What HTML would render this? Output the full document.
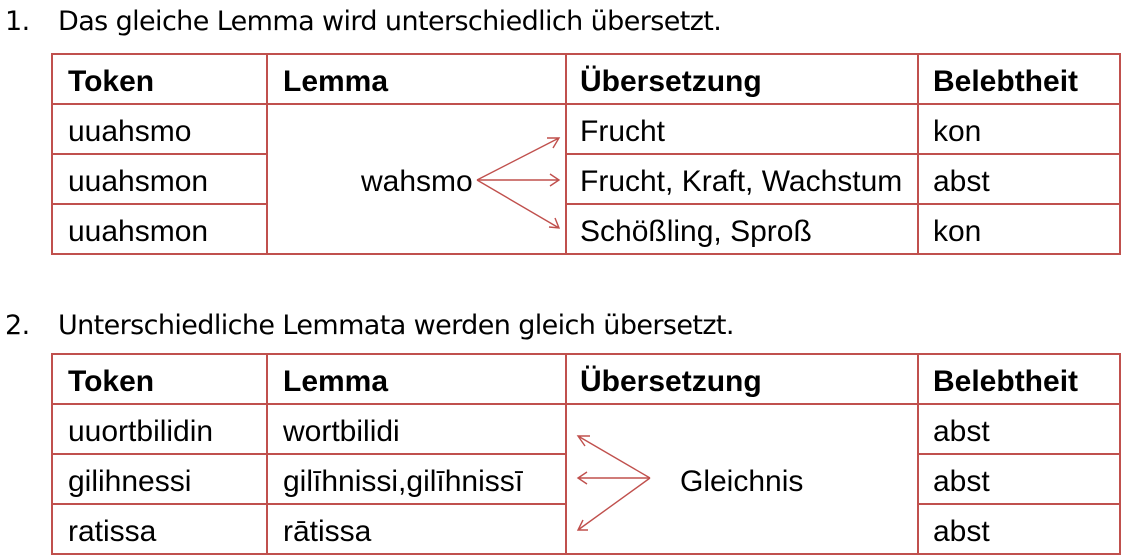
<!DOCTYPE html>
<html><head><meta charset="utf-8"><style>
body{margin:0;width:1133px;height:558px;background:#fff;position:relative;overflow:hidden;font-family:"Liberation Sans",Arial,sans-serif;color:#000}
.t{position:absolute;font-size:30px;line-height:50px;height:50px;white-space:nowrap;margin-top:2px}
.b{font-weight:bold}
.h{position:absolute;font-size:27px;line-height:40px;white-space:nowrap;font-family:"DejaVu Sans","Liberation Sans",sans-serif;letter-spacing:-0.6px}
svg{position:absolute;left:0;top:0}
</style></head><body>
<svg width="1133" height="558" stroke="#c0504d" stroke-width="2" fill="none">
<rect x="52" y="54" width="1068" height="200"/>
<line x1="52" y1="104" x2="1120" y2="104"/>
<line x1="52" y1="154" x2="267" y2="154"/><line x1="566" y1="154" x2="1120" y2="154"/>
<line x1="52" y1="204" x2="267" y2="204"/><line x1="566" y1="204" x2="1120" y2="204"/>
<line x1="267" y1="54" x2="267" y2="254"/><line x1="566" y1="54" x2="566" y2="254"/><line x1="918" y1="54" x2="918" y2="254"/>
<rect x="52" y="354" width="1068" height="200"/>
<line x1="52" y1="404" x2="1120" y2="404"/>
<line x1="52" y1="454" x2="566" y2="454"/><line x1="918" y1="454" x2="1120" y2="454"/>
<line x1="52" y1="504" x2="566" y2="504"/><line x1="918" y1="504" x2="1120" y2="504"/>
<line x1="267" y1="354" x2="267" y2="554"/><line x1="566" y1="354" x2="566" y2="554"/><line x1="918" y1="354" x2="918" y2="554"/>
<g stroke-width="1.4">
<path d="M477 180 L559 138 M547 138 L559 138 L553 148"/>
<path d="M477 180 L559 180 M550 174 L559 180 L550 186"/>
<path d="M477 180 L559 228 M549 227 L559 228 L555 218"/>
<path d="M650 478 L578 436 M590 436 L578 436 L585 446"/>
<path d="M650 478 L578 478 M587 472 L578 478 L587 484"/>
<path d="M650 478 L578 530 M588 530 L578 530 L583 520"/>
</g>
</svg>
<div class="h" style="left:5px;top:2px">1.</div>
<div class="h" style="left:58px;top:2px">Das gleiche Lemma wird unterschiedlich übersetzt.</div>
<div class="h" style="left:5px;top:306px">2.</div>
<div class="h" style="left:58px;top:306px">Unterschiedliche Lemmata werden gleich übersetzt.</div>

<div class="t b" style="left:68px;top:55px">Token</div>
<div class="t b" style="left:283px;top:55px">Lemma</div>
<div class="t b" style="left:580px;top:55px">Übersetzung</div>
<div class="t b" style="left:933px;top:55px">Belebtheit</div>
<div class="t" style="left:68px;top:105px">uuahsmo</div>
<div class="t" style="left:68px;top:155px">uuahsmon</div>
<div class="t" style="left:68px;top:205px">uuahsmon</div>
<div class="t" style="left:361px;top:155px">wahsmo</div>
<div class="t" style="left:580px;top:105px">Frucht</div>
<div class="t" style="left:580px;top:155px">Frucht, Kraft, Wachstum</div>
<div class="t" style="left:580px;top:205px">Schößling, Sproß</div>
<div class="t" style="left:933px;top:105px">kon</div>
<div class="t" style="left:933px;top:155px">abst</div>
<div class="t" style="left:933px;top:205px">kon</div>

<div class="t b" style="left:68px;top:355px">Token</div>
<div class="t b" style="left:283px;top:355px">Lemma</div>
<div class="t b" style="left:580px;top:355px">Übersetzung</div>
<div class="t b" style="left:933px;top:355px">Belebtheit</div>
<div class="t" style="left:68px;top:405px">uuortbilidin</div>
<div class="t" style="left:68px;top:455px">gilihnessi</div>
<div class="t" style="left:68px;top:505px">ratissa</div>
<div class="t" style="left:283px;top:405px">wortbilidi</div>
<div class="t" style="left:283px;top:455px">gilīhnissi,gilīhnissī</div>
<div class="t" style="left:283px;top:505px">rātissa</div>
<div class="t" style="left:680px;top:455px">Gleichnis</div>
<div class="t" style="left:933px;top:405px">abst</div>
<div class="t" style="left:933px;top:455px">abst</div>
<div class="t" style="left:933px;top:505px">abst</div>
</body></html>
